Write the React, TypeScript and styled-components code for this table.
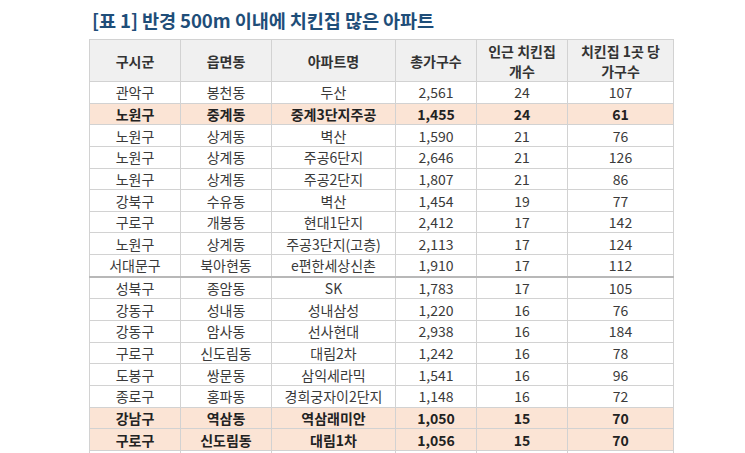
import React from 'react';
import styled, { createGlobalStyle } from 'styled-components';

const GlobalStyle = createGlobalStyle`
  html, body {
    margin: 0;
    padding: 0;
    background: #ffffff;
  }
  body {
    font-family: 'Noto Sans CJK KR', 'Noto Sans', sans-serif;
  }
`;

const Page = styled.div`
  width: 745px;
  height: 453px;
  overflow: hidden;
  padding: 6px 0 0 89px;
  box-sizing: border-box;
`;

const Title = styled.h1`
  margin: 0 0 6px 3px;
  font-size: 18.6px;
  line-height: 27px;
  font-weight: 700;
  color: #1f4e79;
  letter-spacing: -0.1px;
`;

const Table = styled.table`
  border-collapse: collapse;
  table-layout: fixed;
  width: 578px;
  font-size: 14px;
  color: #3a3a3a;
`;

const HeadCell = styled.th<{ w: number }>`
  width: ${(p) => p.w}px;
  height: 41px;
  padding: 0;
  background: #f0f0f0;
  border: 1px solid #d2d2d2;
  font-weight: 700;
  line-height: 20px;
  text-align: center;
  color: #333333;
`;

const Row = styled.tr<{ hot?: boolean; split?: boolean }>`
  background: ${(p) => (p.hot ? '#fbe4d5' : '#ffffff')};
  font-weight: ${(p) => (p.hot ? 700 : 400)};
  color: ${(p) => (p.hot ? '#222222' : '#3a3a3a')};
  & > td {
    border-top: ${(p) => (p.split ? '2px solid #b8b8b8' : '1px solid #d2d2d2')};
  }
`;

const Cell = styled.td`
  height: 20.65px;
  padding: 0;
  border: 1px solid #d2d2d2;
  text-align: center;
  line-height: 18px;
  white-space: nowrap;
`;

const columns = [
  { label: '구시군', w: 90 },
  { label: '읍면동', w: 90 },
  { label: '아파트명', w: 123 },
  { label: '총가구수', w: 80 },
  { label: '인근 치킨집\n개수', w: 90 },
  { label: '치킨집 1곳 당\n가구수', w: 105 },
];

const rows: { cells: string[]; hot?: boolean; split?: boolean }[] = [
  { cells: ['관악구', '봉천동', '두산', '2,561', '24', '107'] },
  { cells: ['노원구', '중계동', '중계3단지주공', '1,455', '24', '61'], hot: true },
  { cells: ['노원구', '상계동', '벽산', '1,590', '21', '76'] },
  { cells: ['노원구', '상계동', '주공6단지', '2,646', '21', '126'] },
  { cells: ['노원구', '상계동', '주공2단지', '1,807', '21', '86'] },
  { cells: ['강북구', '수유동', '벽산', '1,454', '19', '77'] },
  { cells: ['구로구', '개봉동', '현대1단지', '2,412', '17', '142'] },
  { cells: ['노원구', '상계동', '주공3단지(고층)', '2,113', '17', '124'] },
  { cells: ['서대문구', '북아현동', 'e편한세상신촌', '1,910', '17', '112'] },
  { cells: ['성북구', '종암동', 'SK', '1,783', '17', '105'], split: true },
  { cells: ['강동구', '성내동', '성내삼성', '1,220', '16', '76'] },
  { cells: ['강동구', '암사동', '선사현대', '2,938', '16', '184'] },
  { cells: ['구로구', '신도림동', '대림2차', '1,242', '16', '78'] },
  { cells: ['도봉구', '쌍문동', '삼익세라믹', '1,541', '16', '96'] },
  { cells: ['종로구', '홍파동', '경희궁자이2단지', '1,148', '16', '72'] },
  { cells: ['강남구', '역삼동', '역삼래미안', '1,050', '15', '70'], hot: true },
  { cells: ['구로구', '신도림동', '대림1차', '1,056', '15', '70'], hot: true },
  { cells: ['', '', '', '', '', ''] },
];

const App = () => {
  return (
    <Page>
      <GlobalStyle />
      <Title>[표 1] 반경 500m 이내에 치킨집 많은 아파트</Title>
      <Table>
        <thead>
          <tr>
            {columns.map((c) => (
              <HeadCell key={c.label} w={c.w}>
                {c.label.split('\n').map((line, i) => (
                  <div key={i}>{line}</div>
                ))}
              </HeadCell>
            ))}
          </tr>
        </thead>
        <tbody>
          {rows.map((r, i) => (
            <Row key={i} hot={r.hot} split={r.split}>
              {r.cells.map((v, j) => (
                <Cell key={j}>{v}</Cell>
              ))}
            </Row>
          ))}
        </tbody>
      </Table>
    </Page>
  );
};

export default App;
